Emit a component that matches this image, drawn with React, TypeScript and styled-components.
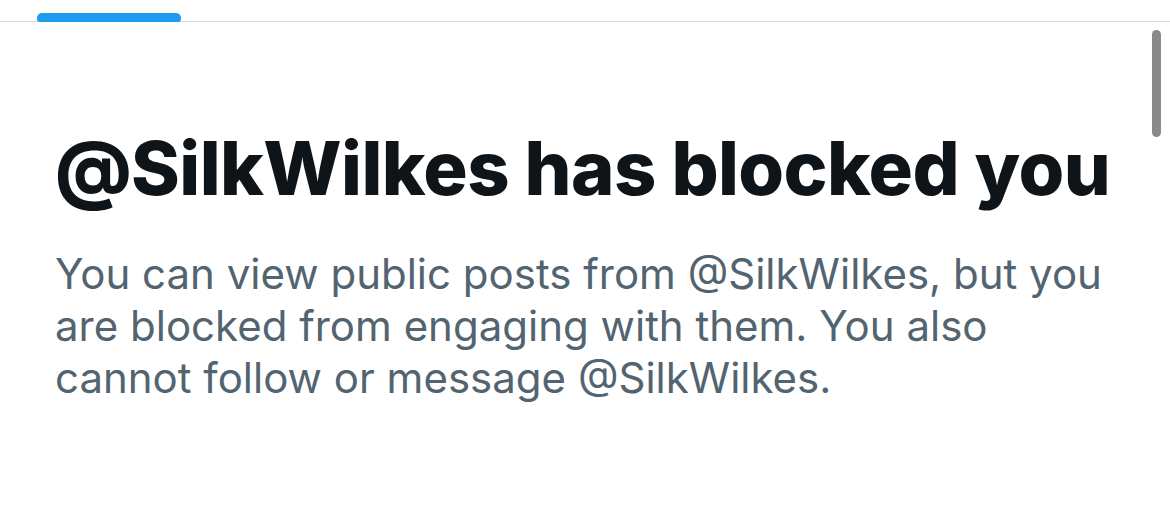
import React from 'react'
import styled, { createGlobalStyle } from 'styled-components'

const GlobalStyle = createGlobalStyle`
  html, body {
    margin: 0;
    padding: 0;
    background: #ffffff;
  }
  body {
    font-family: Inter, 'Noto Sans', 'Liberation Sans', sans-serif;
    overflow: hidden;
  }
`

const App: React.FC = () => {
  const handle = '@SilkWilkes'

  return (
    <>
      <GlobalStyle />
      <Page>
        <TabBar>
          <TabIndicator />
        </TabBar>
        <Content>
          <Title>{handle} has blocked you</Title>
          <Message>
            You can view public posts from {handle}, but you are blocked from
            engaging with them. You also cannot follow or message {handle}.
          </Message>
        </Content>
        <Scrollbar />
      </Page>
    </>
  )
}

export default App

const Page = styled.div`
  position: relative;
  width: 1170px;
  height: 526px;
  background: #ffffff;
  overflow: hidden;
`

const TabBar = styled.div`
  height: 21px;
  border-bottom: 1px solid #cfd9de;
  display: flex;
  align-items: flex-end;
  padding-left: 37px;
`

const TabIndicator = styled.div`
  width: 144px;
  height: 9px;
  margin-bottom: -1px;
  border-radius: 5px 5px 3px 3px;
  background: #1d9bf0;
`

const Content = styled.div`
  padding: 103px 40px 0 55px;
  display: flex;
  flex-direction: column;
  gap: 37px;
`

const Title = styled.h1`
  margin: 0;
  font-size: 74px;
  line-height: 86px;
  font-weight: 800;
  letter-spacing: -0.6px;
  color: #0f1419;
  white-space: nowrap;
`

const Message = styled.p`
  margin: 0;
  width: 1060px;
  font-size: 42px;
  line-height: 52px;
  font-weight: 400;
  color: #536471;
`

const Scrollbar = styled.div`
  position: absolute;
  top: 30px;
  right: 9px;
  width: 9px;
  height: 107px;
  border-radius: 5px;
  background: #8a8a8a;
`
